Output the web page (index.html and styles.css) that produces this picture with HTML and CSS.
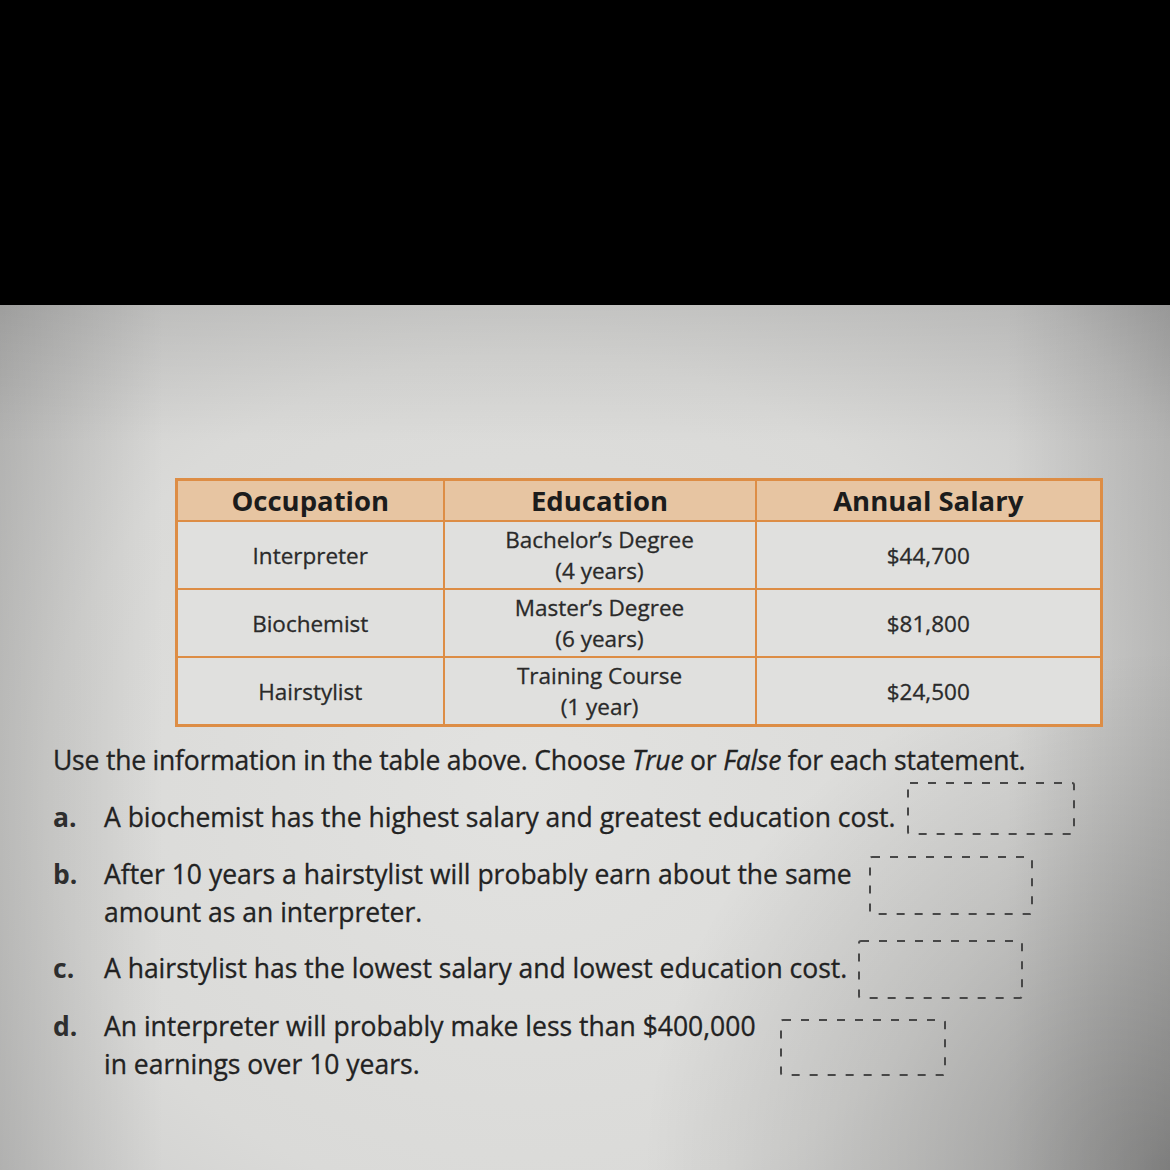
FILE: index.html
```html
<!DOCTYPE html>
<html>
<head>
<meta charset="utf-8">
<link rel="stylesheet" href="styles.css">
</head>
<body>
<div class="topbar"></div>
<div class="page">
  <table class="salary">
    <colgroup><col class="c1"><col class="c2"><col class="c3"></colgroup>
    <thead>
      <tr><th>Occupation</th><th>Education</th><th>Annual Salary</th></tr>
    </thead>
    <tbody>
      <tr><td>Interpreter</td><td class="edu">Bachelor’s Degree<br>(4 years)</td><td>$44,700</td></tr>
      <tr><td>Biochemist</td><td class="edu">Master’s Degree<br>(6 years)</td><td>$81,800</td></tr>
      <tr><td>Hairstylist</td><td class="edu">Training Course<br>(1 year)</td><td>$24,500</td></tr>
    </tbody>
  </table>
  <p class="intro">Use the information in the table above. Choose <i>True</i> or <i>False</i> for each statement.</p>
  <div class="q q1">
    <span class="lbl">a.</span>
    <span class="txt">A biochemist has the highest salary and greatest education cost.</span>
    <svg class="box b1" width="168" height="53" viewBox="0 0 168 53"><rect x="1" y="1" width="166" height="51" rx="2" fill="none" stroke="#474747" stroke-width="2" stroke-dasharray="8 10"/></svg>
  </div>
  <div class="q q2">
    <span class="lbl">b.</span>
    <span class="txt">After 10 years a hairstylist will probably earn about the same<br>amount as an interpreter.</span>
    <svg class="box b2" width="164" height="59" viewBox="0 0 164 59"><rect x="1" y="1" width="162" height="57" rx="2" fill="none" stroke="#474747" stroke-width="2" stroke-dasharray="8 10"/></svg>
  </div>
  <div class="q q3">
    <span class="lbl">c.</span>
    <span class="txt">A hairstylist has the lowest salary and lowest education cost.</span>
    <svg class="box b3" width="165" height="59" viewBox="0 0 165 59"><rect x="1" y="1" width="163" height="57" rx="2" fill="none" stroke="#474747" stroke-width="2" stroke-dasharray="8 10"/></svg>
  </div>
  <div class="q q4">
    <span class="lbl">d.</span>
    <span class="txt">An interpreter will probably make less than $400,000<br>in earnings over 10 years.</span>
    <svg class="box b4" width="166" height="57" viewBox="0 0 166 57"><rect x="1" y="1" width="164" height="55" rx="2" fill="none" stroke="#474747" stroke-width="2" stroke-dasharray="8 10"/></svg>
  </div>
</div>
</body>
</html>
```
FILE: styles.css
```css
html, body {
  margin: 0;
  padding: 0;
  background: #000;
}
body {
  width: 1170px;
  height: 1170px;
  overflow: hidden;
  font-family: "Open Sans", "Liberation Sans", sans-serif;
  color: #222;
}
.topbar {
  height: 305px;
  background: #000;
}
.page {
  height: 865px;
  box-sizing: border-box;
  padding-top: 173px;
  background:
    linear-gradient(to bottom, rgba(0,0,0,0.09), rgba(0,0,0,0) 16%),
    radial-gradient(ellipse 45% 60% at 100% 100%, rgba(0,0,0,0.28), rgba(0,0,0,0) 100%),
    linear-gradient(to right, rgba(0,0,0,0.14), rgba(0,0,0,0) 14%, rgba(0,0,0,0) 86%, rgba(0,0,0,0.12)),
    radial-gradient(ellipse 75% 90% at 45% 55%, #e2e2e0 0%, #dadad8 55%, #cacac9 85%, #b8b8b8 100%);
}
.salary {
  margin-left: 175px;
  width: 925px;
  border-collapse: collapse;
  table-layout: fixed;
  border: 3px solid #dd8d45;
}
.c1 { width: 267px; }
.c2 { width: 312px; }
.c3 { width: 346px; }
.salary th {
  height: 39px;
  padding: 0;
  background: #e7c5a2;
  font-size: 27.5px;
  font-weight: 700;
  color: #1c1c1c;
  border: 2px solid #dd8d45;
  line-height: 1;
}
.salary td {
  padding: 0;
  height: 66px;
  text-align: center;
  font-size: 22.5px;
  color: #2a2a2a;
  -webkit-text-stroke: 0.3px #2a2a2a;
  border: 2px solid #dd8d45;
  background: #e0e0de;
  line-height: 31px;
}
.intro {
  margin: 14px 0 0 53px;
  font-size: 26.5px;
  line-height: 38px;
  letter-spacing: -0.2px;
  color: #222;
  -webkit-text-stroke: 0.3px #222;
}
.q {
  display: flex;
  align-items: flex-start;
  margin-top: 19px;
  font-size: 26.5px;
  line-height: 38px;
  height: 38px;
}
.q2, .q4 { height: 76px; }
.q3 { margin-top: 18px; }
.q4 { margin-top: 20px; }
.lbl {
  width: 51px;
  margin-left: 53px;
  font-weight: 700;
  color: #2e2e2e;
  flex: none;
}
.txt {
  color: #222;
  -webkit-text-stroke: 0.3px #222;
  flex: none;
}
.box { flex: none; display: block; }
.b1 { margin-left: 12px; margin-top: -16px; }
.b2 { margin-left: 17px; margin-top: 1px; }
.b3 { margin-left: 11px; margin-top: -9px; }
.b4 { margin-left: 24px; margin-top: 12px; }
```
